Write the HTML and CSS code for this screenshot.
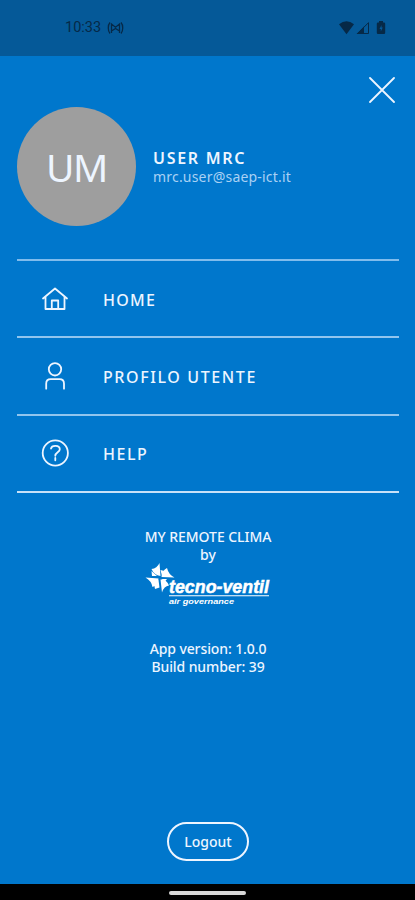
FILE: index.html
```html
<!DOCTYPE html>
<html lang="it">
<head>
<meta charset="utf-8">
<meta name="viewport" content="width=device-width, initial-scale=1">
<title>My Remote Clima</title>
<link rel="stylesheet" href="styles.css">
</head>
<body>
<div class="app">
  <header class="status">
    <div class="status-left">
      <span class="clock">10:33</span>
      <svg width="17" height="14" viewBox="0 0 17 14" fill="none" stroke="currentColor" stroke-width="1.3"><path d="M3 1.500C.7 4 .7 10 3 12.500M14 1.500c2.300 2.500 2.300 8.500 0 11M4.500 12V3l4 3.200 4-3.200v9M4.500 10l4-2.500 4 2.500"/></svg>
    </div>
    <svg class="status-icons" width="48" height="14" viewBox="0 0 48 14" fill="currentColor"><path d="M0 3.300Q7.500-2.800 15 3.300L7.500 13.300z"/><path d="M17.500 13L25 5.500V13z"/><path d="M18.500 12.500L29.500 1.700v10.800z" fill="none" stroke="currentColor"/><path fill-rule="evenodd" d="M40 1.500V0h4v1.500h1q1.200 0 1.200 1.200v9q0 1.300-1.200 1.300h-6q-1.200 0-1.200-1.300v-9q0-1.200 1.200-1.200zM42.500 4l-2 4h1.300v2.500l2-4h-1.300z"/></svg>
  </header>
  <main class="drawer">
    <button class="close" aria-label="Chiudi"><svg width="26" height="26" viewBox="0 0 26 26" fill="none" stroke="currentColor" stroke-width="1.8" stroke-linecap="round"><path d="M1 1l24 24M25 1L1 25"/></svg></button>
    <section class="profile">
      <div class="avatar"><span>UM</span></div>
      <div class="identity"><div class="name">USER MRC</div><div class="email">mrc.user@saep-ict.it</div></div>
    </section>
    <nav class="menu">
      <a class="item"><svg width="28" height="28" viewBox="0 0 28 28"><path d="M2 13.500L14 3.500l12 10M4.500 12v12h19V12M10.800 24v-8.500h6.400V24"/></svg><span class="home">HOME</span></a>
      <a class="item"><svg width="28" height="28" viewBox="0 0 28 28"><circle cx="14" cy="7.300" r="6.200"/><path d="M5.200 26.700v-5q0-4.500 4.500-4.500h8.800q4.500 0 4.500 4.500v5"/></svg><span class="user">PROFILO UTENTE</span></a>
      <a class="item"><svg width="28" height="28" viewBox="0 0 28 28"><circle cx="14.300" cy="14" r="12.600"/><path d="M10 9.500c.7-3.600 8.800-3.600 8.800.7 0 3.200-4.500 2.900-4.500 6.600M14.300 19v2.300"/></svg><span class="help">HELP</span></a>
    </nav>
    <section class="about">
      <div class="product">MY REMOTE CLIMA</div>
      <div class="by">by</div>
      <svg class="logo" width="126" height="44" viewBox="0 0 126 44" fill="currentColor">
        <path d="M14.500 1L15.500 14Q9 13 6.500 7Q12 6.500 14.500 1z"/>
        <path d="M29.500 15.500L16.500 15Q17 8.500 22 6Q23.500 12.500 29.500 15.500z"/>
        <path d="M17 30.500L15.500 17.500Q22 17.500 24 23.500Q19 24 17 30.500z"/>
        <path d="M.5 15.500L13.500 16.500Q13.500 23 7.500 25Q6.500 19 .5 15.500z"/>
        <path d="M15.500 8L19.500 9L17 14zM22 17L20 19.500L16 17zM9 22L13.500 18L14.500 25.500L10 27zM6.500 9L12 14L7 14z"/>
        <text class="brand" x="24" y="31" textLength="100" lengthAdjust="spacingAndGlyphs">tecno-ventil</text>
        <path d="M24 33.200h100v1H24z"/>
        <text class="tagline" x="24" y="42" textLength="65" lengthAdjust="spacingAndGlyphs">air governance</text>
      </svg>
      <div class="version">App version: 1.0.0</div>
      <div class="build">Build number: 39</div>
    </section>
    <button class="logout">Logout</button>
  </main>
  <footer class="navbar"><div class="pill"></div></footer>
</div>
</body>
</html>
```
FILE: styles.css
```css
* { box-sizing: border-box; }
body { margin: 0; background: #0077cc; font-family: "Noto Sans", sans-serif; color: #edf5ff; }
button { padding: 0; border: 0; background: none; color: inherit; font: inherit; }
svg { display: block; flex: none; }
.app { width: 415px; height: 900px; display: flex; flex-direction: column; overflow: hidden; }
.status { height: 56px; flex: none; background: #055998; color: #062947; display: flex; justify-content: space-between; padding: 20px 28px 0 65px; }
.status-left { display: flex; gap: 5px; height: 16px; align-items: center; }
.clock { width: 37px; font: 14.500px/16px Roboto, sans-serif; white-space: nowrap; }
.status-icons { margin-top: 1px; }
.drawer { flex: 1; padding: 0 16px 0 17px; display: flex; flex-direction: column; }
.close { align-self: flex-end; margin: 21px 4px 0 0; height: 26px; }
.profile { display: flex; align-items: center; gap: 17px; height: 119px; margin-top: 4px; }
.avatar { width: 119px; height: 119px; flex: none; border-radius: 50%; background: #9e9e9e; display: flex; align-items: center; justify-content: center; font-size: 39px; line-height: 1; letter-spacing: -1.500px; }
.identity { white-space: nowrap; }
.name { font-size: 16px; line-height: 20px; font-weight: 600; letter-spacing: 1.700px; }
.email { font-size: 14px; line-height: 18px; letter-spacing: .2px; color: #a9d1f4; }
.menu { margin-top: 33px; border-top: 2px solid #80bcec; }
.item { height: 77.300px; border-bottom: 2px solid #91c5ee; display: flex; align-items: center; padding-left: 24px; gap: 34px; font-size: 16px; line-height: 20px; font-weight: 500; white-space: nowrap; }
.item span { padding-top: 2px; }
.item:last-child { border-bottom-color: #c8e1f8; }
.item svg { fill: none; stroke: currentColor; stroke-width: 1.800; stroke-linejoin: round; stroke-linecap: round; }
.home { letter-spacing: 1.300px; }
.user { letter-spacing: 1.600px; }
.help { letter-spacing: 1.500px; }
.about { margin-top: 35px; text-align: center; font-size: 14px; line-height: 18px; font-weight: 500; white-space: nowrap; }
.product { letter-spacing: -.05px; }
.logo { margin: -2px auto 0 128px; color: #fff; }
.brand { font: italic bold 18px "Liberation Sans", sans-serif; stroke: currentColor; stroke-width: .5px; }
.tagline { font: italic bold 8px "Liberation Sans", sans-serif; }
.version { margin-top: 34px; letter-spacing: -.1px; }
.build { letter-spacing: -.1px; }
.logout { align-self: center; width: 82px; height: 39px; margin: auto 0 23px; border: 2px solid #edf5ff; border-radius: 20px; font-size: 14px; line-height: 18px; font-weight: 500; }
.navbar { height: 16px; flex: none; background: #000; display: flex; justify-content: center; padding-top: 7px; }
.pill { width: 77px; height: 4px; border-radius: 2px; background: #d8d8d8; }
```
